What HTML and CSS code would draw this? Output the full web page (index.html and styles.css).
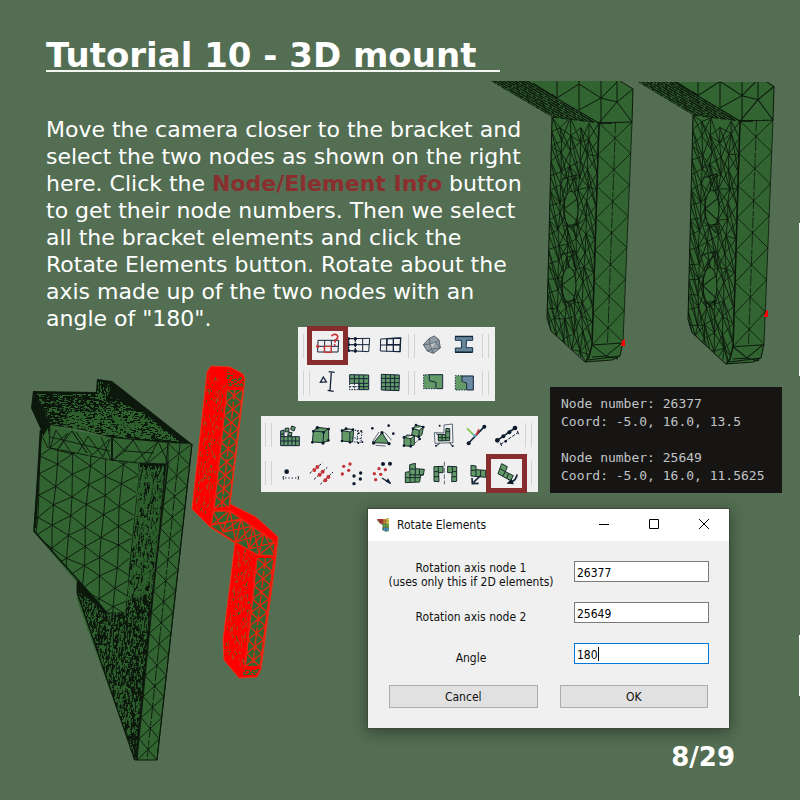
FILE: index.html
```html
<!DOCTYPE html>
<html lang="en">
<head>
<meta charset="utf-8">
<title>Tutorial 10 - 3D mount</title>
<link rel="stylesheet" href="styles.css">
</head>
<body>
<main class="slide">
  <svg class="scene" width="800" height="800" viewBox="0 0 800 800" aria-hidden="true"></svg>

  <h1>Tutorial 10 - 3D mount</h1>
  <p class="intro">Move the camera closer to the bracket and select the two nodes as shown on the right here. Click the <strong>Node/Element Info</strong> button to get their node numbers. Then we select all the bracket elements and click the Rotate Elements button. Rotate about the axis made up of the two nodes with an angle of "180".</p>

  <div class="figures">
    <div class="toolbars">
      <div class="toolbar view">
        <div class="row">
          <span class="handle"></span>
          <button class="marked" aria-label="Node/Element Info"><svg viewBox="0 0 93 93"><path class="n" d="M18 31H80L78 66L17 66ZM17 49H78M38 31V66M58 31V66"/><path class="r" d="M37 49H58V67H37Z"/><circle class="rf" cx="17" cy="49" r="5"/><path class="r t" d="M59 19Q61 12 69 13Q79 15 77 23Q75 28 69 31V38"/><circle class="rf" cx="68" cy="45" r="3"/></svg></button>
          <button aria-label="Nodes"><svg viewBox="0 0 93 93"><path class="n" d="M16 26L80 25L77 65L16 62ZM16 44H79M59 25V64"/><path class="n b" stroke-dasharray="5 3" d="M17 26V62M37 22V68M17 26H37M17 44H37M17 62H37"/><g class="nf"><circle cx="17" cy="26" r="4"/><circle cx="37" cy="26" r="5"/><circle cx="17" cy="44" r="4"/><circle cx="37" cy="44" r="5"/><circle cx="17" cy="62" r="4"/><circle cx="37" cy="63" r="5"/></g></svg></button>
          <button aria-label="Elements"><svg viewBox="0 0 93 93"><path class="n" d="M20 27L80 24L78 65L19 63ZM20 45H79M38 26V64"/><path class="n b" d="M39 26L80 24L78 65L58 64V25M39 44H79M39 26V44"/></svg></button>
          <span class="handle"></span>
          <button aria-label="Mesh body"><svg viewBox="0 0 93 93"><path d="M19 44L37 25L52 18L66 29L70 54L49 70L31 63Z" fill="#929da5" stroke="#59636b" stroke-width="3"/><path d="M39 42L56 36L44 57Z" fill="#bcc4c8"/><path d="M19 44L39 42L37 25M39 42L56 36L66 29M56 36L70 54L44 57L31 63M44 57L39 42M44 57L49 70" fill="none" stroke="#4d565e" stroke-width="2"/></svg></button>
          <button aria-label="Beam section"><svg viewBox="0 0 93 93"><path d="M22 20H74V31H56L54 53H74V66H22V54H41L40 31H22Z" fill="#668599" stroke="#19364c" stroke-width="3"/><path class="n b" d="M21 19H75M21 67H74"/></svg></button>
          <span class="handle"></span>
        </div>
        <div class="row">
          <span class="handle"></span>
          <button aria-label="Measure"><svg viewBox="0 0 93 93"><path class="n b" d="M25 46L34 30L43 45ZM58 15L54 72M50 14L68 16M47 70L65 73"/></svg></button>
          <button aria-label="Show part of mesh"><svg viewBox="0 0 93 93"><path class="gf" d="M20 23L77 24V68L48 68V49L20 47Z"/><path class="n" d="M20 23L77 24V68H48V49H20ZM20 35H77M48 49H77M48 59H77M34 23V48M48 24V68M62 24V68"/><path class="n" stroke-dasharray="5 3" d="M20 49V68H48M34 49V68M20 59H48"/></svg></button>
          <button aria-label="Show whole mesh"><svg viewBox="0 0 93 93"><path class="gf" d="M22 22L76 24L75 71L22 69Z"/><path class="n" d="M22 22L76 24L75 71L22 69ZM22 34H76M22 47H76M22 59H76M35 23V70M49 23V70M62 23V70"/></svg></button>
          <span class="handle"></span>
          <button aria-label="Merge regions"><svg viewBox="0 0 93 93"><path class="gf" d="M20 23L77 22V65H20Z"/><path class="n" d="M37 23H77V65H59M37 23V41L57 46V65"/><path class="n" stroke-dasharray="4 4" d="M36 23H20V65H57"/></svg></button>
          <button aria-label="Split regions"><svg viewBox="0 0 93 93"><path class="gf" d="M22 26H42V46L55 48V69H22Z"/><path d="M42 26H76V69H56V48L42 44Z" fill="#688aa0"/><path class="n" d="M42 27H76V69H56V48L42 44Z"/><path class="n" stroke-dasharray="4 4" d="M41 26H22V69H55"/></svg></button>
          <span class="handle"></span>
        </div>
      </div>
      <div class="toolbar edit">
        <div class="row">
          <span class="handle"></span>
          <button aria-label="Create elements"><svg viewBox="0 0 93 93"><path class="gf" d="M20 32L30 30V50H76V77H20Z"/><path class="n" d="M20 33L30 30V50H76V77H20ZM20 50H30M20 63H76M20 42H30M30 50V77M42 50V77M54 50V77M65 50V77"/><path class="g" d="M33 25L44 24L45 35L34 36ZM53 18L64 22L60 33L50 28ZM43 38L54 37L52 48L41 47Z"/></svg></button>
          <button aria-label="Extrude"><svg viewBox="0 0 93 93"><path class="g" d="M25 33L37 22L71 26V62L54 68L22 66Z"/><path class="n" d="M25 33L56 36L71 26M56 36L54 68"/><g class="nf"><circle cx="25" cy="34" r="4"/><circle cx="37" cy="23" r="5"/><circle cx="71" cy="27" r="4"/><circle cx="56" cy="37" r="4"/><circle cx="22" cy="67" r="4"/><circle cx="54" cy="69" r="5"/><circle cx="70" cy="61" r="4"/></g></svg></button>
          <button aria-label="Copy elements"><svg viewBox="0 0 93 93"><path class="g" d="M18 32L30 26L53 29L50 66L18 63ZM18 32L42 36L53 29M42 36L41 66"/><path class="n" stroke-dasharray="4 4" d="M57 31L78 33L75 67L53 66M65 32L63 66M47 53L76 56"/><g class="nf"><circle cx="18" cy="32" r="4"/><circle cx="30" cy="26" r="4"/><circle cx="51" cy="29" r="4"/><circle cx="18" cy="63" r="4"/><circle cx="42" cy="67" r="4"/><circle cx="76" cy="34" r="3"/><circle cx="68" cy="40" r="3"/><circle cx="67" cy="69" r="3"/><circle cx="79" cy="66" r="3"/></g></svg></button>
          <button aria-label="Scale elements"><svg viewBox="0 0 93 93"><path class="g" d="M45 38L65 70L20 68Z"/><path class="n h" d="M36 36L16 66M53 37L74 61M26 76L56 78"/><g class="nf"><circle cx="16" cy="25" r="4"/><circle cx="65" cy="17" r="4"/><circle cx="79" cy="41" r="4"/><circle cx="45" cy="38" r="5"/><circle cx="20" cy="69" r="5"/><circle cx="66" cy="71" r="5"/></g></svg></button>
          <button aria-label="Move elements"><svg viewBox="0 0 93 93"><path class="g" d="M18 52L27 45L49 47V74L38 79L18 77ZM18 52L39 56L49 47M39 56L38 79M45 26L54 15L76 21L72 44L62 52L41 44ZM45 26L64 31L76 21M64 31L62 52"/><path class="n" stroke-dasharray="5 4" d="M52 68L66 56"/><g class="nf"><circle cx="18" cy="52" r="4"/><circle cx="18" cy="77" r="4"/><circle cx="38" cy="79" r="4"/><circle cx="54" cy="15" r="4"/><circle cx="76" cy="21" r="4"/><circle cx="45" cy="26" r="4"/><circle cx="62" cy="50" r="4"/><circle cx="65" cy="57" r="4"/></g></svg></button>
          <button aria-label="Frame elements"><svg viewBox="0 0 93 93"><path class="n h" d="M45 15L70 12L72 68L18 70L16 38L45 39Z"/><path class="g" d="M28 43L50 44L51 25L62 26V62L28 63ZM28 53H62M39 43V63M50 44V62M51 35H62"/><path class="n" d="M32 70L21 78M62 68L70 78M28 45L22 41"/><g class="nf"><circle cx="21" cy="77" r="3"/><circle cx="71" cy="78" r="3"/><circle cx="32" cy="17" r="3"/></g></svg></button>
          <button aria-label="Beam orientation"><svg viewBox="0 0 93 93"><path class="n t" d="M26 69L73 20"/><path d="M43 47L21 25" stroke="#7bcb48" stroke-width="5"/><path d="M48 47L57 28" stroke="#c23a42" stroke-width="6"/><path d="M38 42L48 50" stroke="#5cb6dc" stroke-width="5"/><g class="nf"><circle cx="26" cy="70" r="6"/><circle cx="73" cy="20" r="6"/></g></svg></button>
          <button aria-label="Beam elements"><svg viewBox="0 0 93 93"><path class="n t" d="M19 61L72 24"/><path class="n" stroke-dasharray="10 4" d="M29 73L82 37"/><path class="n" d="M28 68L32 78M79 33L83 43"/><g class="nf"><circle cx="19" cy="61" r="7"/><circle cx="37" cy="49" r="6"/><circle cx="55" cy="37" r="6"/><circle cx="72" cy="24" r="7"/><circle cx="44" cy="64" r="4"/></g></svg></button>
          <span class="handle"></span>
        </div>
        <div class="row">
          <span class="handle"></span>
          <button aria-label="Create node"><svg viewBox="0 0 93 93"><circle class="nf" cx="38" cy="41" r="7"/><path class="n" d="M29 54Q25 60 29 65M72 54Q76 60 72 65"/><path class="n" stroke-dasharray="4 6" d="M33 60H70"/></svg></button>
          <button aria-label="Fuse nodes"><svg viewBox="0 0 93 93"><path class="n" stroke-dasharray="8 4" d="M14 46L52 15M27 64L67 28M46 79L84 42"/><g class="rf"><circle cx="28" cy="36" r="6"/><circle cx="37" cy="27" r="6"/><circle cx="44" cy="50" r="6"/><circle cx="53" cy="41" r="6"/><circle cx="61" cy="67" r="6"/><circle cx="70" cy="57" r="6"/></g></svg></button>
          <button aria-label="Copy nodes"><svg viewBox="0 0 93 93"><g class="rf"><circle cx="23" cy="25" r="5"/><circle cx="42" cy="18" r="5"/><circle cx="38" cy="37" r="5"/><circle cx="19" cy="48" r="5"/></g><g class="nf"><circle cx="54" cy="54" r="5"/><circle cx="74" cy="45" r="5"/><circle cx="73" cy="63" r="5"/><circle cx="54" cy="77" r="5"/></g></svg></button>
          <button aria-label="Move nodes"><svg viewBox="0 0 93 93"><g class="rf"><circle cx="36" cy="32" r="5"/><circle cx="55" cy="35" r="5"/><circle cx="22" cy="47" r="5"/><circle cx="41" cy="49" r="5"/><circle cx="26" cy="65" r="5"/></g><g class="nf"><circle cx="48" cy="18" r="6"/><circle cx="69" cy="17" r="6"/><path d="M73 78L63 61L56 71Z"/></g><path class="n b" d="M45 60L70 76"/></svg></button>
          <button aria-label="Assemble elements"><svg viewBox="0 0 93 93"><path class="g" d="M35 20L52 16V32L79 34L76 51H68L65 72L22 74V43L35 41ZM35 33H52M35 50L76 51M52 33V50M64 34V51M22 59H66M36 43V73M51 50V73"/></svg></button>
          <button aria-label="Mirror elements"><svg viewBox="0 0 93 93"><path class="g" d="M15 26L42 25V44H29L30 71L15 70ZM83 26L56 25V44H69L68 71L83 70ZM15 41H30M15 56H30M28 25V44M83 41H69M83 56H69M70 25V44"/><path class="n h" stroke-dasharray="14 5" d="M46 11V79"/></svg></button>
          <button aria-label="Move selection"><svg viewBox="0 0 93 93"><path class="g" d="M33 22L48 24V35L77 37V58L33 54ZM33 37H48V55M62 36V57"/><path class="n t" d="M60 54L40 74"/><path class="n t" d="M36 60L37 77L56 76"/></svg></button>
          <button class="marked" aria-label="Rotate Elements"><svg viewBox="0 0 93 93"><path class="g" d="M32 17L49 26L43 41L67 53L59 68L21 47ZM27 32L43 41L35 55M53 46L47 61"/><path class="n t" d="M78 49Q77 65 60 72"/><path class="nf" d="M47 77L61 62L69 79Z"/></svg></button>
          <span class="handle"></span>
        </div>
      </div>
    </div>
    <pre class="console">Node number: 26377
Coord: -5.0, 16.0, 13.5

Node number: 25649
Coord: -5.0, 16.0, 11.5625</pre>
  </div>

  <form class="dialog" onsubmit="return false">
    <header class="titlebar">
      <svg class="app" viewBox="0 0 14 14"><path d="M0 1H8L12 0V13L9 14L5 12L6 7L3 6Z" fill="#7a9656"/><path d="M0 1H6V6L3 5Z" fill="#c0303a"/><path d="M6 1H9V5H6Z" fill="#e08a36"/><path d="M9 1H12V6H9Z" fill="#e2d044"/><path d="M6 6H12V9H6Z" fill="#62b050"/><path d="M5 10H12L11 13H7Z" fill="#3f8fc0"/><path d="M0 3H12M6 6H12M6 9H12M3 1V5M6 1V12M9 1V13" stroke="#4d4030" stroke-width=".5"/></svg>
      <span class="caption">Rotate Elements</span>
      <button type="button" aria-label="Minimize"><svg viewBox="0 0 12 12"><path d="M1 5.500H11"/></svg></button>
      <button type="button" aria-label="Maximize"><svg viewBox="0 0 12 12"><path d="M1.500 .5H10.500V9.500H1.500Z"/></svg></button>
      <button type="button" aria-label="Close"><svg viewBox="0 0 12 12"><path d="M1 0L11 10M11 0L1 10"/></svg></button>
    </header>
    <div class="fields">
      <label for="node1">Rotation axis node 1<br>(uses only this if 2D elements)</label>
      <span class="field"><input id="node1" type="text" value="26377"></span>
      <label class="single" for="node2">Rotation axis node 2</label>
      <span class="field"><input id="node2" type="text" value="25649"></span>
      <label class="single" for="angle">Angle</label>
      <span class="field active"><input id="angle" type="text" value="180"></span>
    </div>
    <div class="actions">
      <button type="button">Cancel</button>
      <button type="submit">OK</button>
    </div>
  </form>

  <footer>8/29</footer>
</main>
<script src="scene.js"></script>
</body>
</html>
```

FILE: styles.css
```css
* { box-sizing: border-box; }

body {
  margin: 0;
  background: #536e53;
  color: #fff;
  font-family: "DejaVu Sans", sans-serif;
}

.slide {
  position: relative;
  min-height: 100vh;
  padding-top: 40px;
  overflow: hidden;
}

.scene {
  position: absolute;
  top: 0;
  left: 0;
  z-index: 0;
}

h1, .intro, .figures, .dialog, footer { position: relative; z-index: 1; }

h1 {
  width: fit-content;
  margin: 0 0 0 46px;
  padding-right: 24px;
  border-bottom: 2px solid #f4f6f4;
  font-size: 34px;
  line-height: 30px;
}

.intro {
  max-width: 484px;
  margin: 44px 0 0 46px;
  font-size: 22px;
  line-height: 27px;
}

.intro strong { color: #8a2e2e; }

.figures {
  display: flex;
  justify-content: flex-end;
  align-items: flex-end;
  gap: 12px;
  margin-top: -5px;
  padding-right: 18px;
}

.toolbars {
  display: flex;
  flex-direction: column;
  align-items: flex-start;
  gap: 15px;
}

.toolbar { background: #f0f0f0; }
.view { margin-left: 37px; padding-left: 2px; padding-right: 4px; }
.edit { padding-left: 1px; padding-right: 4px; }
.row { display: flex; align-items: center; }
.view .row { height: 37px; }
.edit .row { height: 38px; }

.handle {
  width: 7px;
  height: 24px;
  margin: 0 2px 0 3px;
  border: solid #d2d2d2;
  border-width: 0 1px;
}

.row button {
  position: relative;
  width: 31px;
  height: 37px;
  padding: 0;
  border: 0;
  background: none;
}

.row svg { display: block; width: 31px; height: 31px; margin: auto; }

.marked { z-index: 1; }

.marked::after {
  content: "";
  position: absolute;
  inset: -1px -5px;
  border: 5px solid #872d2d;
}

.n { fill: none; stroke: #14243a; stroke-width: 3; }
.r { fill: none; stroke: #cc3333; stroke-width: 4; }
.g { fill: #629a68; stroke: #18282c; stroke-width: 3; }
.gf { fill: #629a68; }
.nf { fill: #0c1a2b; }
.rf { fill: #c43238; }
.b { stroke-width: 4; }
.t { stroke-width: 5; }
.h { stroke-width: 2; }

.console {
  width: 232px;
  margin: 0 0 -1px;
  padding: 8px 11px;
  background: #171513;
  color: #c0c4c6;
  font: 13px/18px "DejaVu Sans Mono", monospace;
}

.dialog {
  width: 363px;
  margin: 16px 70px 0 auto;
  border: 1px solid #3b4a3b;
  background: #f0f0f0;
  box-shadow: 0 3px 14px rgba(0, 0, 0, .4);
  color: #101010;
  font: 12px/14px "DejaVu Sans Condensed", "DejaVu Sans", sans-serif;
}

.titlebar {
  display: flex;
  align-items: center;
  height: 32px;
  padding-left: 9px;
  background: #fff;
}

.app { width: 14px; height: 14px; margin-right: 6px; }
.caption { flex: 1; }

.titlebar button {
  width: 50px;
  height: 32px;
  padding: 0;
  border: 0;
  background: none;
}

.titlebar button svg { display: block; width: 12px; height: 12px; margin: auto; }
.titlebar button path { fill: none; stroke: #000; }

.fields {
  display: grid;
  grid-template-columns: 1fr 135px;
  grid-auto-rows: 41px;
  align-items: start;
  column-gap: 20px;
  padding: 20px 20px 0;
}

.fields label { text-align: center; white-space: nowrap; }
.fields .single { padding-top: 8px; }
.field { position: relative; }

.field input {
  display: block;
  width: 100%;
  height: 21px;
  padding: 2px 2px 0;
  border: 1px solid #7a7a7a;
  background: #fff;
  color: #000;
  font: inherit;
}

.active input { border-color: #0078d7; }

.active::after {
  content: "";
  position: absolute;
  top: 4px;
  left: 24px;
  width: 1px;
  height: 14px;
  background: #000;
}

.actions {
  display: grid;
  grid-template-columns: 1fr 1fr;
  gap: 22px;
  padding: 1px 21px 20px;
}

.actions button {
  height: 23px;
  padding: 0;
  border: 1px solid #adadad;
  background: #e1e1e1;
  color: #101010;
  font: inherit;
}

footer {
  margin-top: 12px;
  padding-right: 65px;
  font-size: 26px;
  font-weight: bold;
  line-height: 32px;
  text-align: right;
}
```

FILE: scene.js
```js
const NS = 'http://www.w3.org/2000/svg';
const scene = document.querySelector('.scene');
const GREEN = '#316431', DARK = '#0d180d', RED = '#ff0000';

let seed = 7;
function rnd() {
  seed = (seed * 16807) % 2147483647;
  return seed / 2147483647;
}

function add(parent, name, attrs) {
  const el = document.createElementNS(NS, name);
  for (const k in attrs) el.setAttribute(k, attrs[k]);
  parent.appendChild(el);
  return el;
}

const pts = list => list.map(p => p.join(',')).join(' ');
const poly = (g, list, fill) => add(g, 'polygon', { points: pts(list), fill });
const line = (g, d, color, width, extra) =>
  add(g, 'path', Object.assign({ d, fill: 'none', stroke: color, 'stroke-width': width }, extra));
const mix = (a, b, t) => [a[0] + (b[0] - a[0]) * t, a[1] + (b[1] - a[1]) * t];
const seg = (a, b) => `M${a[0].toFixed(1)} ${a[1].toFixed(1)}L${b[0].toFixed(1)} ${b[1].toFixed(1)}`;

let clips = 0;
function clipped(g, list) {
  const id = 'clip' + clips++;
  poly(add(g, 'clipPath', { id }), list, '#000');
  return add(g, 'g', { 'clip-path': `url(#${id})` });
}

// A strip of crossed cells between two edges, with a broken centre line.
function strip(g, a0, a1, b0, b1, n, color, width) {
  let d = seg(a0, a1) + seg(b0, b1);
  for (let i = 0; i < n; i++) {
    const s = i / n, e = (i + 1) / n;
    d += seg(mix(a0, a1, s), mix(b0, b1, e)) + seg(mix(b0, b1, s), mix(a0, a1, e));
  }
  line(g, d, color, width);
  line(g, seg(mix(a0, b0, .5), mix(a1, b1, .5)), color, width, { 'stroke-dasharray': '11 2 5 1' });
}

// Short flecks that show the face colour between tightly packed edges.
function flecks(g, list, count, color, w, h, slope) {
  const c = clipped(g, list);
  const xs = list.map(p => p[0]), ys = list.map(p => p[1]);
  const x0 = Math.min(...xs), x1 = Math.max(...xs), y0 = Math.min(...ys), y1 = Math.max(...ys);
  let d = '';
  for (let i = 0; i < count; i++) {
    const x = Math.round(x0 + rnd() * (x1 - x0)), y = Math.round(y0 + rnd() * (y1 - y0));
    const l = 1 + Math.floor(rnd() * Math.max(w, h));
    d += w > h ? `M${x} ${y}h${l}v1h${-l}z` : `M${x} ${y}h1l${(-l * slope).toFixed(1)} ${l}h-1z`;
  }
  add(c, 'path', { d, fill: color });
}

function bracket(transform, clipTop) {
  const outer = clipped(scene, [[0, clipTop], [800, clipTop], [800, 400], [0, 400]]);
  const g = add(outer, 'g', { transform });
  poly(g, [[491, 81], [480, 75], [612, 75], [619, 81], [633, 89], [632, 122], [623, 342], [621, 354], [617, 359], [587, 362], [551, 331], [548, 323], [547, 310], [552, 117]], GREEN);
  const slant = clipped(g, [[486, 78], [522, 78], [599, 123], [552, 117]]);
  for (let i = 0; i <= 9; i++)
    line(slant, seg([488 + i * 4, 79], mix([552, 117], [599, 123], i / 9)), DARK, 1.3, { 'stroke-dasharray': `${9 + i % 3 * 4} 1 4 1` });
  for (let i = 0; i < 14; i++)
    line(slant, seg([494 + i * 7, 78], [508 + i * 7, 128]), DARK, .7);
  line(g, 'M522 78L599 123L632 122M617 79L633 89L632 122M557 79V98M579 79V110M601 79V123M617 81V102M533 83L557 98L579 84L601 98L617 82M601 98L617 102L633 89M579 110L601 98M617 102L599 123M617 102L632 122M557 98L552 94', DARK, 1);

  const face = clipped(g, [[552, 117], [599, 123], [592, 345], [589, 360], [585, 361], [551, 331], [547, 318], [548, 280]]);
  const rows = 15, cols = 5, p = [];
  for (let r = 0; r <= rows; r++) {
    p.push([]);
    for (let c = 0; c <= cols; c++) {
      const t = r / rows;
      const top = mix([552, 117], [599, 123], c / cols), bottom = mix([546, 338], [590, 372], c / cols);
      const q = mix(top, bottom, t);
      if (c > 0 && c < cols) { q[0] += (rnd() - .5) * 3; q[1] += (rnd() - .5) * 6 + (c % 2) * 7; }
      p[r].push(q);
    }
  }
  let d = '';
  for (let r = 0; r < rows; r++)
    for (let c = 0; c < cols; c++) {
      d += seg(p[r][c], p[r + 1][c]);
      if ((r * 3 + c) % 5 < 2) d += seg(p[r][c], p[r][c + 1]);
      d += seg(p[r][c], p[r + 1][c + 1]) + seg(p[r][c + 1], p[r + 1][c]);
      if (r < rows - 1 && (r + c) % 2) d += seg(p[r][c], p[r + 2][c + 1]);
    }
  line(face, d, DARK, .85);
  for (const [x, y] of [[571, 209], [569, 285]]) {
    add(face, 'ellipse', { cx: x, cy: y, rx: 7, ry: 18, fill: GREEN, stroke: DARK, 'stroke-width': 1 });
    line(face, `M${x - 7} ${y - 10}V${y + 10}M${x + 6} ${y - 10}L${x - 7} ${y}L${x + 6} ${y + 12}M${x - 7} ${y + 17}L${x + 7} ${y + 15}M${x - 5} ${y + 14}L${x + 4} ${y + 24}M${x + 5} ${y - 18}V${y - 35}M${x - 3} ${y - 18}L${x + 5} ${y - 34}L${x - 9} ${y - 30}`, DARK, 1);
  }
  strip(g, [599, 123], [592, 345], [632, 122], [623, 342], 7, DARK, .8);
  line(g, 'M599 123L592 345L589 357L585 362M599 123H612', DARK, 1.5);
  line(g, 'M552 117L547 318L551 331L585 362L612 360L620 356L623 342M592 345L622 343L606 356L592 345M588 360L620 356M592 357L606 356L618 359', DARK, 1);
  line(g, 'M552 117L599 123', DARK, 1, { 'stroke-dasharray': '7 2' });
}

bracket('', 81);
bracket('translate(141 -4) scale(1 1.0167)', 82);
poly(scene, [[621, 346], [622, 341], [625, 339], [625, 346]], RED);
poly(scene, [[764, 316], [766, 311], [768, 310], [768, 317], [764, 317]], RED);

// Mount part
const m = add(scene, 'g', {});
poly(m, [[41, 430], [50, 425], [112, 438], [192, 444], [157, 760], [135, 760], [77, 600], [77, 583], [33, 531]], GREEN);
const web = [[77, 579], [95, 599], [107, 613], [125, 613], [129, 570], [140, 463], [166, 464], [155, 560], [137, 760], [134, 760], [77, 593]];
poly(m, web, DARK);
flecks(m, [[77, 590], [107, 613], [125, 613], [127, 596], [153, 590], [137, 760], [134, 758]], 3000, '#2d5f2d', 1, 4, .1);
flecks(m, [[140, 465], [165, 465], [153, 592], [127, 600]], 1700, '#2d5f2d', 1, 7, .1);

const plate = clipped(m, [[41, 452], [50, 448], [111, 460], [139, 463], [129, 560], [128, 585], [125, 613], [107, 613], [95, 599], [33, 531]]);
poly(plate, [[30, 440], [150, 440], [150, 620], [30, 620]], GREEN);
let tri = '';
const node = (c, r) => {
  const y = 434 + r * 20.5 + (((c % 2) + 2) % 2) * 10 + Math.sin(c * 4 + r * 2) * 1.5;
  return [41 + c * 16.5 - (y - 450) * .06 + Math.sin(c * 3 + r * 5), y];
};
for (let c = -1; c < 8; c++)
  for (let r = -1; r < 10; r++) {
    const q = node(c, r), odd = ((c % 2) + 2) % 2;
    tri += seg(q, node(c, r + 1)) + seg(q, node(c + 1, r)) + seg(q, node(c + 1, r + (odd ? 1 : -1)));
  }
line(plate, tri, DARK, .9);
line(m, 'M107 613H125M50 448L111 460L139 463L166 464M95 599L107 613', DARK, 1, { 'stroke-dasharray': '9 1' });
line(m, 'M41 430L39 470L34 531L95 599L107 613', DARK, 1.5);
line(m, 'M41 430L35 528', DARK, 2.5);
line(m, 'M78 582L106 614', DARK, 2);

line(m, 'M50 425L49 448L72 454L56 430L50 448L68 433L58 449L72 431L87 453L72 431M50 437L110 451M78 453L88 436L103 457L110 439L92 455L76 432M111 460L101 437M112 438L125 451L133 440L147 463L158 441L168 463L168 443M112 440L112 461L134 440M125 451L154 453M125 451L112 461M133 463L158 442M148 463L168 446', DARK, .9);
line(m, 'M112 438V460', DARK, 1.8);
strip(m, [168, 443], [137, 760], [192, 444], [157, 760], 15, DARK, .9);
line(m, 'M168 463L153 590L136 758', DARK, 1.6);
line(m, 'M192 444L157 760H135L77 593V583', DARK, 1);

const lid = [[33, 391], [96, 392], [97, 379], [112, 381], [192, 444], [170, 443], [112, 438], [82, 430], [50, 425], [46, 445], [41, 430], [31, 408]];
poly(m, lid, DARK);
flecks(m, [[36, 393], [100, 394], [120, 400], [180, 441], [112, 435], [50, 424]], 1500, '#2d5f2d', 3, 1, 0);
flecks(m, [[70, 412], [140, 410], [180, 442], [112, 437], [60, 426]], 1100, '#2d5f2d', 5, 1, 0);
flecks(m, [[98, 381], [112, 384], [106, 400], [97, 398]], 60, '#2d5f2d', 1, 3, 0);
poly(m, [[42, 438], [48, 428], [48, 448], [43, 451]], GREEN);
line(m, 'M42 436L48 448', DARK, 1);

// Selected bracket
const s = add(scene, 'g', {});
poly(s, [[211, 366], [230, 367], [243, 374], [245, 379], [230, 504], [256, 517], [278, 537], [276, 557], [261, 669], [257, 677], [239, 678], [224, 660], [223, 640], [235, 543], [210, 527], [192, 509], [207, 372]], RED);
flecks(s, [[208, 372], [226, 385], [211, 518], [194, 507]], 330, '#b0401c', 1, 4, .1);
flecks(s, [[208, 372], [226, 385], [211, 518], [194, 507]], 60, '#3f652c', 1, 3, .1);
flecks(s, [[238, 545], [256, 556], [244, 672], [224, 650]], 330, '#b0401c', 1, 4, .1);
flecks(s, [[238, 545], [256, 556], [244, 672], [224, 650]], 50, '#3f652c', 1, 3, .1);
flecks(s, [[226, 369], [244, 379], [243, 387], [227, 386]], 90, '#3f652c', 3, 1, 0);
flecks(s, [[246, 669], [260, 669], [256, 675], [242, 675]], 60, '#3f652c', 3, 1, 0);
poly(s, [[227, 390], [243, 390], [229, 506], [214, 508]], GREEN);
strip(s, [227, 389], [214, 509], [243, 389], [229, 508], 9, '#ee2410', 1.3);
poly(s, [[214, 511], [229, 511], [275, 542], [273, 556], [258, 555], [236, 542], [211, 526]], GREEN);
line(s, 'M213 511L211 527L236 543L258 555L275 556L275 542L230 511H213M213 511L223 531L230 511L236 543L241 518L249 548L253 526L259 554L264 533L274 554M229 511L212 525L241 519L223 532L253 526L237 542L264 533L249 549L275 542L259 555', '#ee2410', 1.3);
poly(s, [[257, 558], [274, 558], [260, 666], [246, 666]], GREEN);
strip(s, [257, 558], [245, 667], [274, 558], [260, 667], 8, '#ee2410', 1.3);
line(s, 'M211 366L230 367L243 374L245 379L230 504L256 517L278 537L276 557L261 669L257 677L239 678L224 660L223 640L235 543L210 527L192 509L207 372Z', '#e23a1c', 1);

add(scene, 'rect', { x: 799, y: 223, width: 1, height: 153, fill: '#fff' });
add(scene, 'rect', { x: 799, y: 635, width: 1, height: 61, fill: '#fff' });
```
